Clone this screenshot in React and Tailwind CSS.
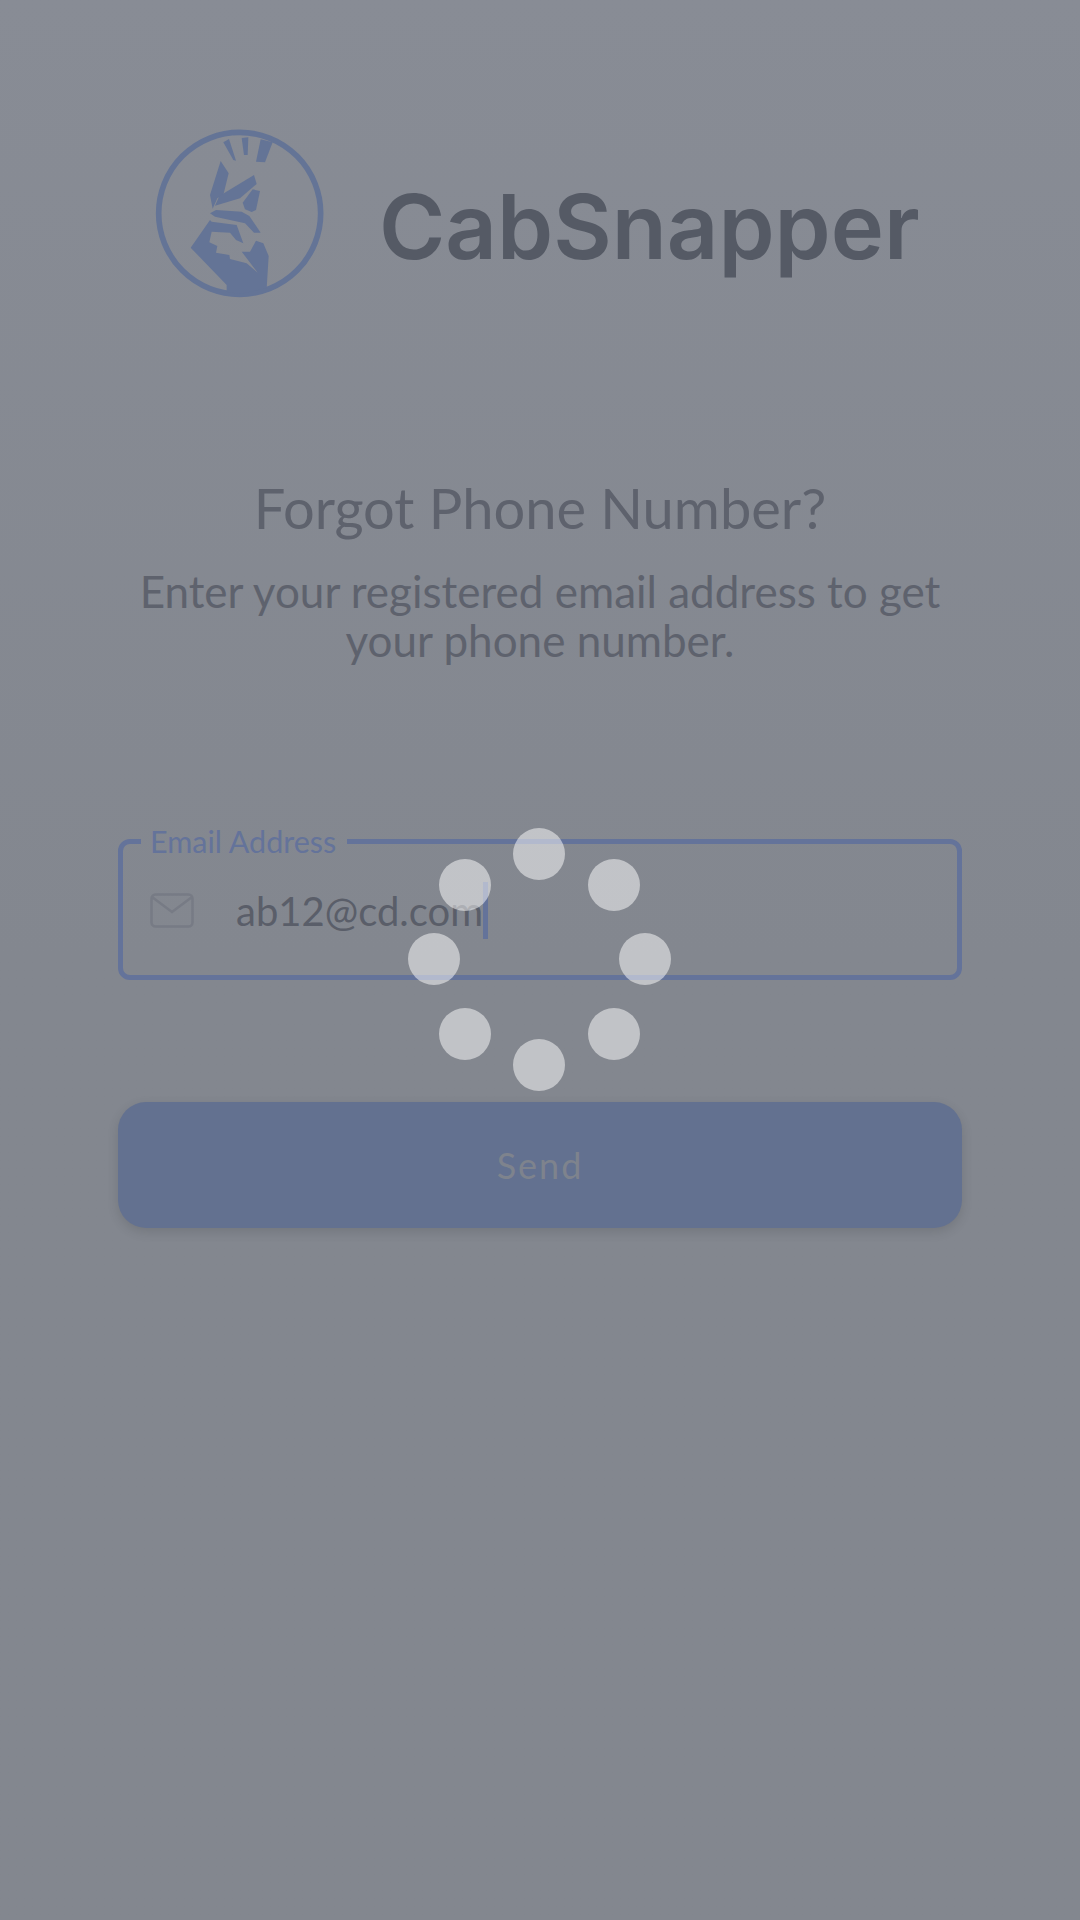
const handFont = { fontFamily: '"Lato", "Noto Sans", sans-serif' };

const dots = [
    "left-[513px] top-[828px]",
    "left-[588px] top-[859px]",
    "left-[619px] top-[933px]",
    "left-[588px] top-[1008px]",
    "left-[513px] top-[1039px]",
    "left-[439px] top-[1008px]",
    "left-[408px] top-[933px]",
    "left-[439px] top-[859px]",
];

// 로고는 기준 이미지를 3배 확대한 좌표로 그림
function Logo() {
    return (
        <svg className="w-[220px] h-[200px] shrink-0" viewBox="0 0 660 600" fill="#647496">
            <circle cx="329" cy="310" r="243" fill="none" stroke="#647496" strokeWidth="17"/>
            <polygon points="280,97 297,87 318,152 310,150"/>
            <polygon points="335,84 355,82 353,135 342,135"/>
            <polygon points="392,88 428,97 405,157 378,155"/>
            <polygon points="272,153 296,190 280,255 262,265 248,296 240,255"/>
            <polygon points="372,195 380,222 330,265 255,287 268,258"/>
            <polygon points="368,238 390,243 378,300 365,306 345,298 338,278"/>
            <polygon points="258,300 335,305 358,318 392,368 372,368 345,340 255,320 240,310"/>
            <polygon points="240,330 182,413 290,525 290,545 330,552 410,535 416,438 400,400 378,392 360,425 335,425 383,488 350,460 300,447 298,435 258,428 262,408 238,397 245,365 300,368 318,390 340,400 320,345 245,335"/>
        </svg>
    );
}

function MailIcon() {
    return (
        <svg className="w-[44px] h-[36px] shrink-0" viewBox="0 0 44 36" fill="none" stroke="#777b85" strokeWidth="2.5">
            <rect x="1.5" y="1.5" width="41" height="32" rx="4"/>
            <path d="M2 4 L22 19 L42 4"/>
        </svg>
    );
}

export default function App() {
    return (
        <div className="relative w-[1080px] h-[1920px] overflow-hidden bg-gradient-to-b from-[#888c95] via-[#83878f] to-[#83878f]" style={handFont}>
            {/* 헤더 */}
            <div className="flex items-start pt-[110px] pl-[130px]">
                <Logo/>
                <span className="ml-[29px] mt-[65px] text-[90px] leading-[104px] font-semibold text-[#555a65]" style={{fontFamily: '"Inter", sans-serif'}}>
                    CabSnapper
                </span>
            </div>

            {/* 안내 문구 */}
            <div className="mt-[163px] flex flex-col items-center text-center text-[#5e626d]">
                <h1 className="text-[56px] leading-[70px] font-normal">Forgot Phone Number?</h1>
                <p className="mt-[24px] w-[860px] text-[44px] leading-[49px]">
                    Enter your registered email address to get your phone number.
                </p>
            </div>

            {/* 이메일 입력 */}
            <fieldset className="mx-[118px] mt-[171px] h-[144px] border-[5px] border-[#64739a] rounded-[12px] pl-[18px] pr-[26px]">
                <legend className="pl-[9px] pr-[11px] text-[30.5px] leading-[10px] text-[#64739a]">Email Address</legend>
                <div className="flex items-center mt-[36px]">
                    <div className="ml-[9px]"><MailIcon/></div>
                    <span className="ml-[42px] text-[40px] leading-[46px] text-[#5a5e69]">ab12@cd.com</span>
                    <span className="w-[5px] h-[57px] bg-[#64739a]"></span>
                </div>
            </fieldset>

            {/* 전송 버튼 */}
            <button className="block mx-[118px] mt-[122px] w-[844px] h-[126px] rounded-[28px] bg-[#637190] shadow-[0_4px_12px_rgba(0,0,0,0.12)] text-[36px] tracking-[2px] text-[#7e838d]">
                Send
            </button>

            {/* 로딩 스피너 */}
            {dots.map((pos) => (
                <div key={pos} className={`absolute ${pos} w-[52px] h-[52px] rounded-full bg-white/50`}></div>
            ))}
        </div>
    );
}
